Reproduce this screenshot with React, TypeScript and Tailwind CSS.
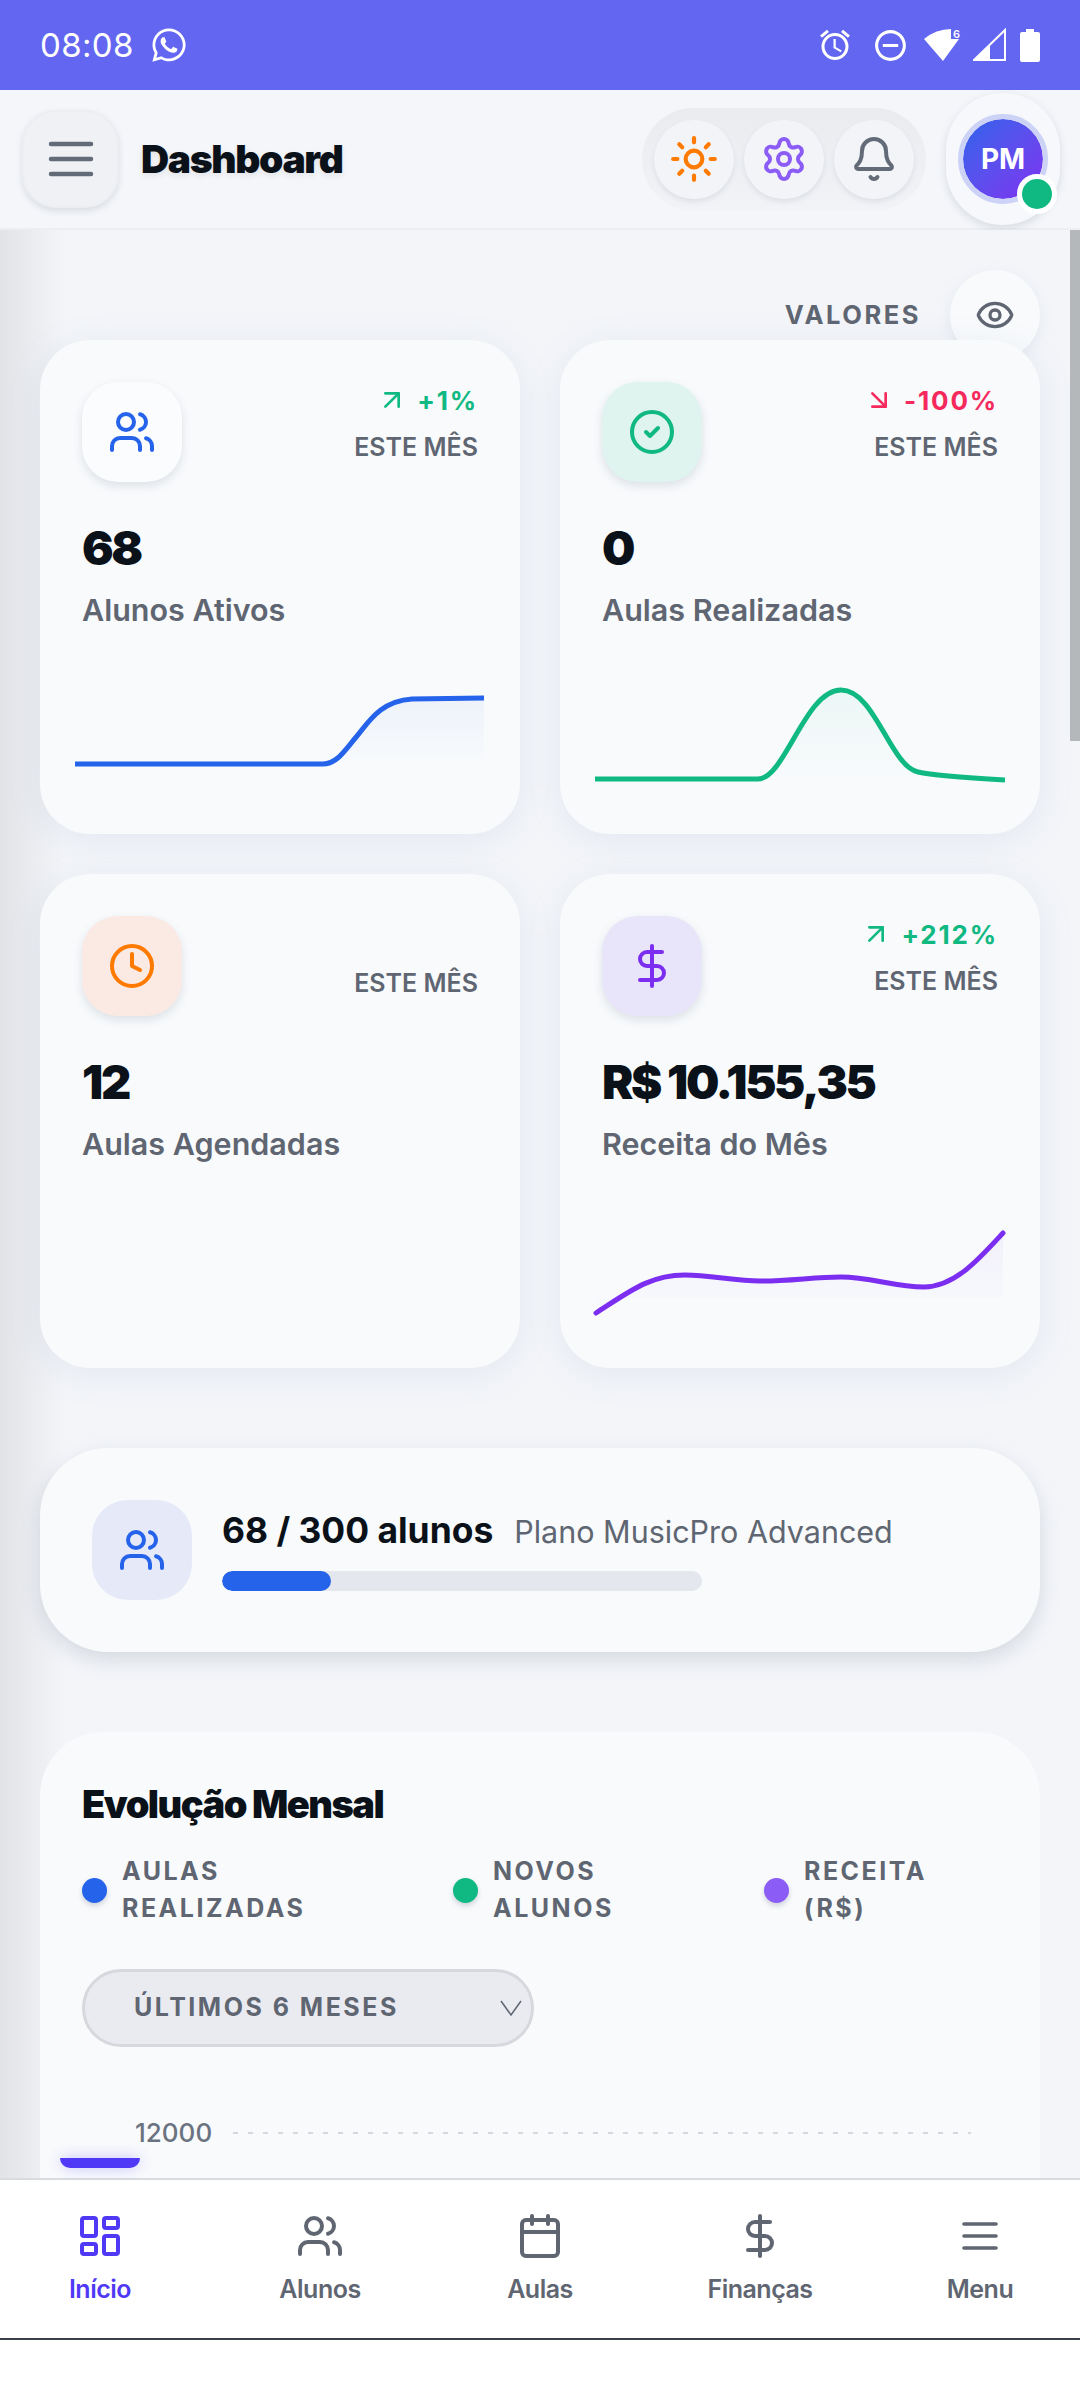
import { ArrowDownRight, ArrowUpRight, Bell, Calendar, CircleCheck, Clock, DollarSign, Eye, LayoutDashboard, Settings, Sun, Users } from "lucide-react";
import { FaWhatsapp } from "react-icons/fa";
import { MdOutlineAlarm, MdOutlineDoDisturbOn } from "react-icons/md";

const Burger = ({ size, className }: { size: number; className?: string }) => (
  <svg width={size} height={size} viewBox="0 0 24 24" fill="none" stroke="currentColor" strokeWidth="1.8" strokeLinecap="round" className={className}>
    <path d="M4 6h16M4 12h16M4 18h16" />
  </svg>
);

const StatusIcons = () => (
  <div className="flex items-center">
    <MdOutlineAlarm size={36} className="text-white" />
    <MdOutlineDoDisturbOn size={37} className="ml-[19px] text-white" />
    <svg width="38" height="36" viewBox="0 0 38 36" className="ml-[15px]">
      <path d="M19 34 L0 12 Q12 2 27 2 L27 12 L35 12 Z" fill="#fff" />
      <text x="29" y="11" fontSize="11" fontWeight="600" fill="#fff">6</text>
    </svg>
    <svg width="34" height="34" viewBox="0 0 34 34" className="ml-[11px]">
      <path d="M1 32 L32 2 V32 Z" fill="none" stroke="#fff" strokeWidth="2" />
      <path d="M1 32 L17 17 V32 Z" fill="#fff" />
    </svg>
    <svg width="20" height="34" viewBox="0 0 20 34" className="ml-[13px]">
      <path d="M6 1h8v3h4a2 2 0 0 1 2 2v26a2 2 0 0 1-2 2H2a2 2 0 0 1-2-2V6a2 2 0 0 1 2-2h4z" fill="#fff" />
    </svg>
  </div>
);

const Header = () => (
  <header className="h-[140px] shrink-0 flex items-center pl-[22px] pr-[20px] bg-[#f4f6fa] border-b-2 border-[#eceef2] relative">
    <button className="w-[97px] h-[98px] rounded-[34px] bg-[#eff1f5] flex items-center justify-center text-[#636b78] border-2 border-[#eceef1] shadow-[0_3px_6px_rgba(100,110,130,0.18)]">
      <Burger size={60} />
    </button>
    <h1 className="ml-[22px] text-[39px] font-black tracking-[-0.035em] text-[#0a1119] [text-shadow:0_3px_6px_rgba(0,0,0,0.08)]">Dashboard</h1>
    <div className="ml-auto w-[284px] h-[103px] rounded-full bg-gradient-to-b from-[#e9ebef] to-[#f1f3f7] flex items-center justify-center gap-[10px]">
      <div className="w-[80px] h-[79px] rounded-full bg-[#f2f4f8] flex items-center justify-center shadow-[0_3px_5px_rgba(100,110,130,0.13)]">
        <Sun size={50} strokeWidth={2} className="text-[#ff7a00]" />
      </div>
      <div className="w-[80px] h-[79px] rounded-full bg-[#f2f4f8] flex items-center justify-center shadow-[0_3px_5px_rgba(100,110,130,0.13)]">
        <Settings size={48} strokeWidth={2} className="text-[#8b5cf6]" />
      </div>
      <div className="w-[80px] h-[79px] rounded-full bg-[#f2f4f8] flex items-center justify-center shadow-[0_3px_5px_rgba(100,110,130,0.13)]">
        <Bell size={48} strokeWidth={2} className="text-[#636b78]" />
      </div>
    </div>
    <div className="ml-[20px] w-[114px] h-[132px] rounded-full bg-[#f7f8fb] flex items-center justify-center relative shadow-[0_3px_8px_rgba(100,110,130,0.2)]">
      <div className="w-[90px] h-[90px] rounded-full border-[5px] border-[#cdd3f6] bg-gradient-to-br from-[#2563eb] to-[#7c2ef0] bg-clip-padding flex items-center justify-center text-white text-[28px] font-bold">PM</div>
      <div className="absolute right-[3px] bottom-[11px] w-[40px] h-[40px] rounded-full bg-[#10b981] border-[5px] border-white" />
    </div>
  </header>
);

type CardProps = {
  icon: React.ReactNode;
  iconBg: string;
  trend?: string;
  trendUp?: boolean;
  value: string;
  label: string;
  chart?: React.ReactNode;
};

const StatCard = ({ icon, iconBg, trend, trendUp, value, label, chart }: CardProps) => (
  <div className="h-[494px] rounded-[50px] bg-[#f8fafc] shadow-[0_6px_34px_rgba(130,145,175,0.13)] pt-[42px] px-[42px] flex flex-col relative">
    <div className="flex justify-between items-start">
      <div className={`w-[100px] h-[100px] rounded-[36px] flex items-center justify-center shadow-[0_4px_10px_rgba(90,100,120,0.16)] ${iconBg}`}>{icon}</div>
      <div className="flex flex-col items-end">
        {trend ? (
          <div className={`h-[36px] flex items-center text-[26px] font-bold tracking-[0.07em] ${trendUp ? "text-[#10b981]" : "text-[#f5295b]"}`}>
            {trendUp ? <ArrowUpRight size={32} strokeWidth={2} className="mr-[9px]" /> : <ArrowDownRight size={32} strokeWidth={2} className="mr-[9px]" />}
            {trend}
          </div>
        ) : (
          <div className="h-[38px]" />
        )}
        <div className="mt-[15px] text-[25px] leading-[28px] font-semibold text-[#5f6672]">ESTE MÊS</div>
      </div>
    </div>
    <div className="mt-[38px] text-[47px] leading-[56px] font-black tracking-[-0.05em] text-[#0a1119]">{value}</div>
    <div className="mt-[14px] text-[30.5px] leading-[40px] font-semibold text-[#5f6672]">{label}</div>
    {chart}
  </div>
);

const Spark = ({ line, area, color, id, cap = "butt" }: { line: string; area: string; color: string; id: string; cap?: "butt" | "round" }) => (
  <svg width="480" height="180" viewBox="0 0 480 180" className="absolute left-0 bottom-0" fill="none">
    <defs>
      <linearGradient id={id} x1="0" y1="0" x2="0" y2="1">
        <stop offset="0%" stopColor={color} stopOpacity="0.05" />
        <stop offset="100%" stopColor={color} stopOpacity="0" />
      </linearGradient>
    </defs>
    <path d={area} fill={`url(#${id})`} />
    <path d={line} stroke={color} strokeWidth="5" strokeLinecap={cap} />
  </svg>
);

const NavItem = ({ icon, label, active }: { icon: React.ReactNode; label: string; active?: boolean }) => (
  <div className={`flex flex-col items-center pt-[32px] ${active ? "text-[#4f39f6]" : "text-[#5f6672]"}`}>
    {icon}
    <span className="mt-[13px] text-[25px] leading-[32px] font-semibold tracking-[-0.02em]">{label}</span>
  </div>
);

const LegendItem = ({ dot, lines, width }: { dot: string; lines: [string, string]; width: string }) => (
  <div className={`flex items-center gap-[15px] ${width}`}>
    <span className={`w-[25px] h-[25px] rounded-full shadow-[0_3px_5px_rgba(90,100,120,0.25)] ${dot}`} />
    <span className="text-[25px] leading-[37px] font-bold tracking-[0.1em] text-[#5f6672]">
      {lines[0]}
      <br />
      {lines[1]}
    </span>
  </div>
);

const App = () => {
  return (
    <div className="w-[1080px] h-[2400px] overflow-hidden flex flex-col bg-white relative [font-family:Inter,sans-serif]">
      {/* Status bar */}
      <div className="h-[90px] shrink-0 bg-[#6366f1] flex items-center justify-between pl-[40px] pr-[40px] text-white">
        <div className="flex items-center">
          <span className="text-[33px] leading-none tracking-[0.01em]">08:08</span>
          <FaWhatsapp size={38} className="ml-[16px]" />
        </div>
        <StatusIcons />
      </div>

      <Header />

      <main className="flex-1 min-h-0 overflow-hidden px-[40px] relative bg-[#f2f4f9] bg-gradient-to-r from-[#e1e3e7] from-0% to-[#f3f5f9] to-[6%]">
        <div className="absolute right-0 top-0 w-[10px] h-[511px] bg-[#b4b8bb]" />

        <div className="pt-[40px] h-[110px] flex justify-end items-start">
          <div className="flex items-center gap-[29px]">
            <span className="text-[25.5px] font-bold tracking-[0.1em] text-[#5f6672]">VALORES</span>
            <div className="w-[90px] h-[90px] rounded-full bg-[#f8fafc] flex items-center justify-center text-[#5f6672] shadow-[0_4px_14px_rgba(130,145,175,0.12)]">
              <Eye size={40} strokeWidth={2} />
            </div>
          </div>
        </div>

        <div className="grid grid-cols-2 gap-[40px] relative">
          <StatCard
            icon={<Users size={48} strokeWidth={2} className="text-[#2563eb]" />}
            iconBg="bg-[#fbfcfe]"
            trend="+1%"
            trendUp
            value="68"
            label="Alunos Ativos"
            chart={
              <Spark
                id="sparkBlue"
                color="#2563eb"
                line="M35 110 H283 C297 110 305 96 317 82 C328 69 340 47 372 45 L444 44"
                area="M35 110 H283 C297 110 305 96 317 82 C328 69 340 47 372 45 L444 44 V110 Z"
              />
            }
          />
          <StatCard
            icon={<CircleCheck size={48} strokeWidth={2} className="text-[#10b981]" />}
            iconBg="bg-[#dff4ee]"
            trend="-100%"
            value="0"
            label="Aulas Realizadas"
            chart={
              <Spark
                id="sparkGreen"
                color="#10b981"
                line="M35 125 H198 C225 125 245 36 281 36 C315 36 330 112 358 118 C375 122 410 124 445 126"
                area="M35 125 H198 C225 125 245 36 281 36 C315 36 330 112 358 118 C375 122 410 124 445 126 V125 Z"
              />
            }
          />
          <StatCard icon={<Clock size={48} strokeWidth={2} className="text-[#ff7a00]" />} iconBg="bg-[#fbeae4]" value="12" label="Aulas Agendadas" />
          <StatCard
            icon={<DollarSign size={48} strokeWidth={2} className="text-[#7c2ef0]" />}
            iconBg="bg-[#e8e4fa]"
            trend="+212%"
            trendUp
            value="R$ 10.155,35"
            label="Receita do Mês"
            chart={
              <Spark
                id="sparkPurple"
                cap="round"
                color="#7c2ef0"
                line="M36 125 C70 103 90 87 125 87 C150 87 175 93 200 93 C230 93 255 89 281 89 C310 89 335 99 364 99 C395 99 420 70 443 45"
                area="M36 125 C70 103 90 87 125 87 C150 87 175 93 200 93 C230 93 255 89 281 89 C310 89 335 99 364 99 C395 99 420 70 443 45 V110 H36 Z"
              />
            }
          />
        </div>

        {/* Plan usage */}
        <div className="mt-[80px] h-[204px] rounded-[68px] bg-[#f8fafc] flex items-center pl-[52px] shadow-[0_8px_20px_rgba(100,110,130,0.2)]">
          <div className="w-[100px] h-[100px] rounded-[36px] bg-[#e6e9f8] flex items-center justify-center">
            <Users size={48} strokeWidth={2} className="text-[#2563eb]" />
          </div>
          <div className="ml-[30px]">
            <div className="flex items-baseline gap-[21px]">
              <span className="text-[35.4px] leading-[44px] font-bold text-[#0a1119]">68 / 300 alunos</span>
              <span className="text-[30.5px] leading-[44px] text-[#5f6672]">Plano MusicPro Advanced</span>
            </div>
            <div className="mt-[17px] w-[480px] h-[20px] rounded-full bg-[#e5e7ee] overflow-hidden">
              <div className="h-full rounded-full bg-[#2563eb]" style={{ width: `${(68 / 300) * 100}%` }} />
            </div>
          </div>
        </div>

        {/* Monthly evolution */}
        <div className="mt-[80px] h-[600px] rounded-t-[64px] bg-[#f8fafc] pt-[46px] px-[42px]">
          <h2 className="text-[38px] leading-[52px] font-black tracking-[-0.04em] text-[#0a1119]">Evolução Mensal</h2>
          <div className="mt-[23px] flex">
            <LegendItem dot="bg-[#2563eb]" lines={["AULAS", "REALIZADAS"]} width="w-[371px]" />
            <LegendItem dot="bg-[#10b981]" lines={["NOVOS", "ALUNOS"]} width="w-[311px]" />
            <LegendItem dot="bg-[#8b5cf6]" lines={["RECEITA", "(R$)"]} width="w-[230px]" />
          </div>
          <div className="mt-[42px] w-[452px] h-[78px] rounded-full bg-[#e9ebf1] border-[3px] border-[#d6d8de] flex items-center justify-between pl-[49px] pr-[8px]">
            <span className="text-[25px] font-bold tracking-[0.1em] text-[#5f6672]">ÚLTIMOS 6 MESES</span>
            <svg width="24" height="20" viewBox="0 0 24 20" fill="none" stroke="#5f6672" strokeWidth="1.5">
              <path d="M2 3 L12 17 L22 3" />
            </svg>
          </div>
          <div className="mt-[71px] flex items-center pl-[53px]">
            <span className="text-[26px] leading-[30px] font-medium text-[#6b7280]">12000</span>
            <svg width="738" height="2" viewBox="0 0 738 2" className="ml-[21px]">
              <path d="M0 1H738" stroke="#d5d8de" strokeWidth="2" strokeDasharray="5 10" />
            </svg>
          </div>
        </div>
      </main>

      {/* Bottom navigation */}
      <nav className="h-[222px] shrink-0 bg-white border-t-2 border-[#d9dbe0] relative">
        <div className="absolute left-[60px] -top-[22px] w-[80px] h-[10px] rounded-b-[10px] bg-[#4f39f6] shadow-[0_0_14px_rgba(79,57,246,0.3)]" />
        <div className="h-[160px] border-b-2 border-[#3b3f47] overflow-hidden">
          <div className="-ml-[10px] grid grid-cols-[repeat(5,220px)]">
            <NavItem active icon={<LayoutDashboard size={48} strokeWidth={2} />} label="Início" />
            <NavItem icon={<Users size={48} strokeWidth={2} />} label="Alunos" />
            <NavItem icon={<Calendar size={48} strokeWidth={2} />} label="Aulas" />
            <NavItem icon={<DollarSign size={48} strokeWidth={2} />} label="Finanças" />
            <NavItem icon={<Burger size={48} />} label="Menu" />
          </div>
        </div>
      </nav>
    </div>
  );
};

export default App;
